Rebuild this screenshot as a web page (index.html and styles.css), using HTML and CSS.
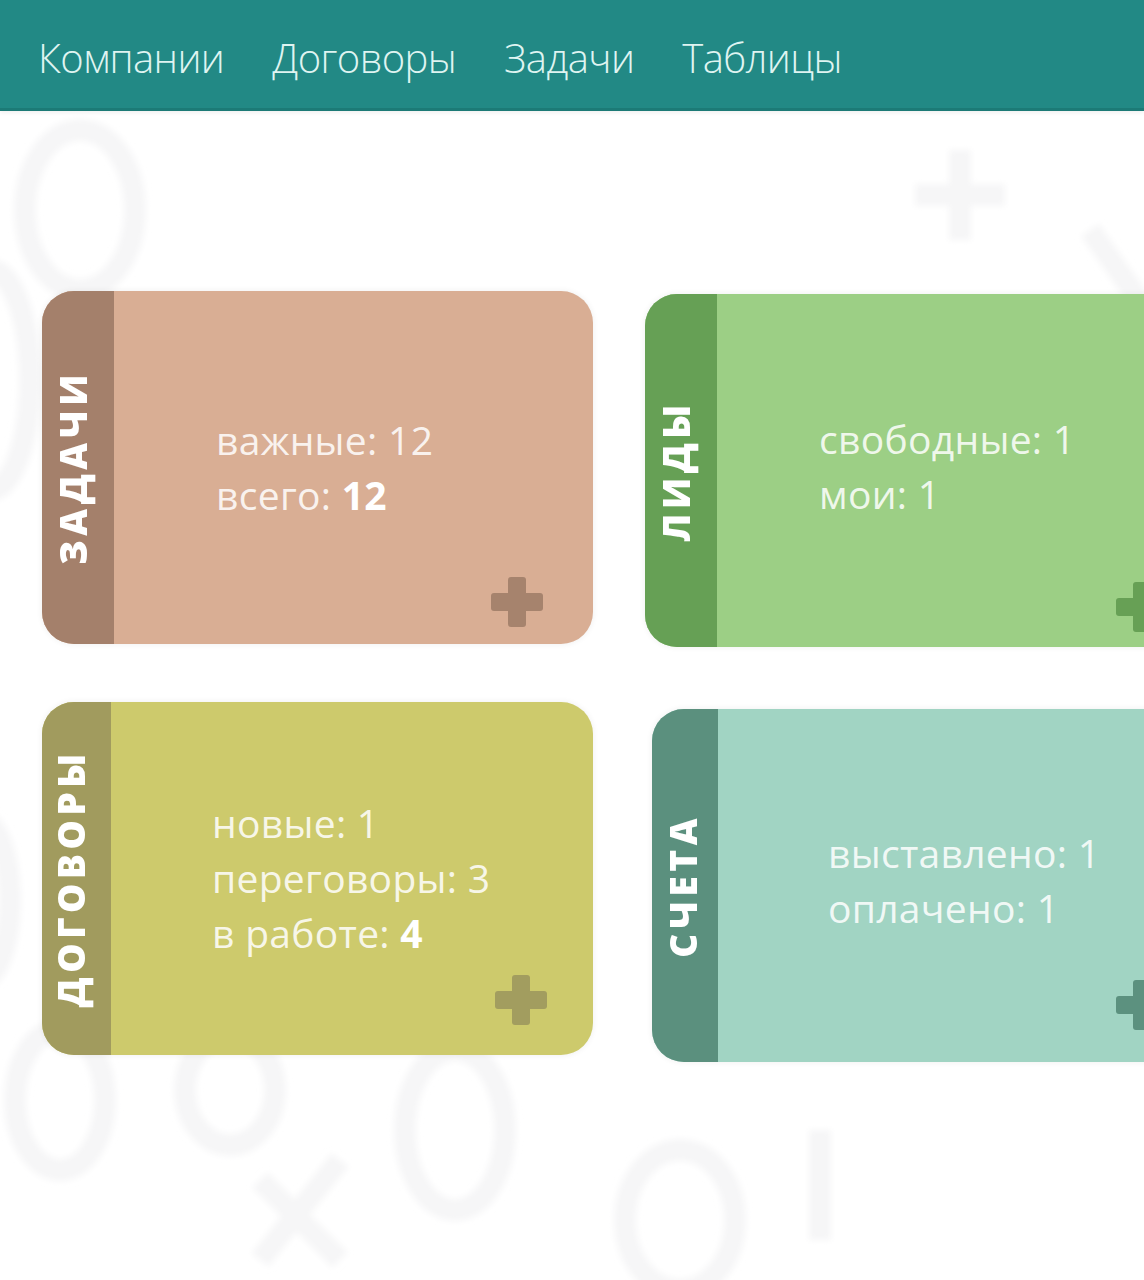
FILE: index.html
```html
<!DOCTYPE html>
<html lang="ru">
<head>
<meta charset="utf-8">
<title>Главная</title>
<link rel="stylesheet" href="styles.css">
</head>
<body>
<svg class="bg-pattern" width="1144" height="1280" viewBox="0 0 1144 1280" aria-hidden="true">
  <defs>
    <filter id="soft"><feGaussianBlur stdDeviation="3"/></filter>
  </defs>
  <g fill="none" stroke="#f6f6f7" stroke-width="22" filter="url(#soft)">
    <ellipse cx="80" cy="210" rx="55" ry="80"/>
    <ellipse cx="-10" cy="380" rx="40" ry="110"/>
    <ellipse cx="60" cy="1100" rx="45" ry="70"/>
    <ellipse cx="230" cy="1090" rx="45" ry="55"/>
    <ellipse cx="455" cy="1130" rx="50" ry="80"/>
    <ellipse cx="680" cy="1220" rx="55" ry="70"/>
    <ellipse cx="-20" cy="900" rx="30" ry="80"/>
    <path d="M260 1180 L340 1260 M340 1160 L260 1260"/>
    <path d="M960 150 L960 240 M915 195 L1005 195"/>
    <path d="M1090 230 L1160 330"/>
    <path d="M820 1130 L820 1240"/>
  </g>
</svg>
<header class="topnav">
  <nav class="menu">
    <a class="menu-item" href="#">Компании</a>
    <a class="menu-item" href="#">Договоры</a>
    <a class="menu-item" href="#">Задачи</a>
    <a class="menu-item" href="#">Таблицы</a>
  </nav>
</header>
<main class="dashboard">
  <section class="card card-tasks">
    <div class="card-band"><span class="card-title">ЗАДАЧИ</span></div>
    <div class="card-body">
      <div class="stats">
        <p class="stat">важные: 12</p>
        <p class="stat">всего: <b>12</b></p>
      </div>
      <span class="plus"></span>
    </div>
  </section>
  <section class="card card-leads">
    <div class="card-band"><span class="card-title">ЛИДЫ</span></div>
    <div class="card-body">
      <div class="stats">
        <p class="stat">свободные: 1</p>
        <p class="stat">мои: 1</p>
      </div>
      <span class="plus"></span>
    </div>
  </section>
  <section class="card card-deals">
    <div class="card-band"><span class="card-title">ДОГОВОРЫ</span></div>
    <div class="card-body">
      <div class="stats">
        <p class="stat">новые: 1</p>
        <p class="stat">переговоры: 3</p>
        <p class="stat">в работе: <b>4</b></p>
      </div>
      <span class="plus"></span>
    </div>
  </section>
  <section class="card card-bills">
    <div class="card-band"><span class="card-title">СЧЕТА</span></div>
    <div class="card-body">
      <div class="stats">
        <p class="stat">выставлено: 1</p>
        <p class="stat">оплачено: 1</p>
      </div>
      <span class="plus"></span>
    </div>
  </section>
</main>
</body>
</html>
```
FILE: styles.css
```css
html, body {
  margin: 0;
  padding: 0;
}
body {
  width: 1144px;
  height: 1280px;
  overflow: hidden;
  background: #ffffff;
  font-family: "Open Sans", "Noto Sans", sans-serif;
  position: relative;
}
.bg-pattern {
  position: absolute;
  left: 0;
  top: 0;
  z-index: 0;
}
.topnav {
  position: relative;
  z-index: 1;
  box-sizing: border-box;
  height: 111px;
  background: #228985;
  border-bottom: 3px solid #1c7a76;
  box-shadow: 0 2px 4px rgba(0, 0, 0, 0.06);
  display: flex;
  align-items: center;
  padding-left: 38px;
}
.menu {
  display: flex;
  gap: 48px;
  margin-top: 6px;
}
.menu-item {
  color: #dff4f1;
  text-decoration: none;
  font-size: 40px;
  font-weight: 300;
  letter-spacing: -0.6px;
}
.dashboard {
  position: relative;
  z-index: 1;
  display: grid;
  grid-template-columns: 551px 573px;
  column-gap: 52px;
  row-gap: 55px;
  align-items: start;
  padding: 180px 0 0 42px;
}
.card {
  display: flex;
  height: 353px;
  border-radius: 32px;
  overflow: hidden;
  box-shadow: 0 0 6px rgba(0, 0, 0, 0.07);
}
.card-band {
  width: 72px;
  flex: none;
  display: flex;
  align-items: center;
  justify-content: center;
  box-sizing: border-box;
  padding-right: 12px;
}
.card-title {
  writing-mode: vertical-rl;
  transform: rotate(180deg);
  color: #ffffff;
  font-size: 37px;
  font-weight: 800;
  letter-spacing: 4.5px;
  line-height: 1;
}
.card-body {
  flex: 1;
  position: relative;
  display: flex;
  align-items: center;
  padding-left: 102px;
}
.stats {
  margin-top: -2px;
}
.stat {
  margin: 0;
  font-size: 39px;
  line-height: 55px;
  letter-spacing: 0.3px;
  color: rgba(255, 255, 255, 0.86);
  font-weight: 400;
}
.stat b {
  font-weight: 700;
  color: #ffffff;
}
.plus {
  position: absolute;
  right: 50px;
  bottom: 17px;
  width: 52px;
  height: 50px;
}
.plus::before,
.plus::after {
  content: "";
  position: absolute;
  background: var(--plus);
  border-radius: 3px;
}
.plus::before {
  left: 17px;
  top: 0;
  width: 18px;
  height: 50px;
}
.plus::after {
  left: 0;
  top: 16px;
  width: 52px;
  height: 18px;
}

.card-tasks { background: #d9ae94; --plus: #a6836d; }
.card-tasks .card-band { background: #a4806b; }

.card-leads { background: #9ccf85; --plus: #67a055; margin-top: 3px; }
.card-leads .card-band { background: #66a055; }
.card-leads .stats { margin-top: -10px; }
.card-leads .plus { bottom: 15px; }

.card-deals { background: #cdca6c; --plus: #a29d5f; }
.card-deals .card-band { background: #a19b5e; width: 69px; }
.card-deals .card-body { padding-left: 101px; }
.card-deals .plus { bottom: 30px; right: 46px; }

.card-bills { background: #a1d4c3; --plus: #5c917f; margin-top: 7px; margin-left: 7px; }
.card-bills .card-band { background: #5b907e; width: 66px; padding-right: 6px; }
.card-bills .card-body { padding-left: 110px; }
.card-bills .stats { margin-top: -12px; }
.card-bills .plus { bottom: 32px; }
```
